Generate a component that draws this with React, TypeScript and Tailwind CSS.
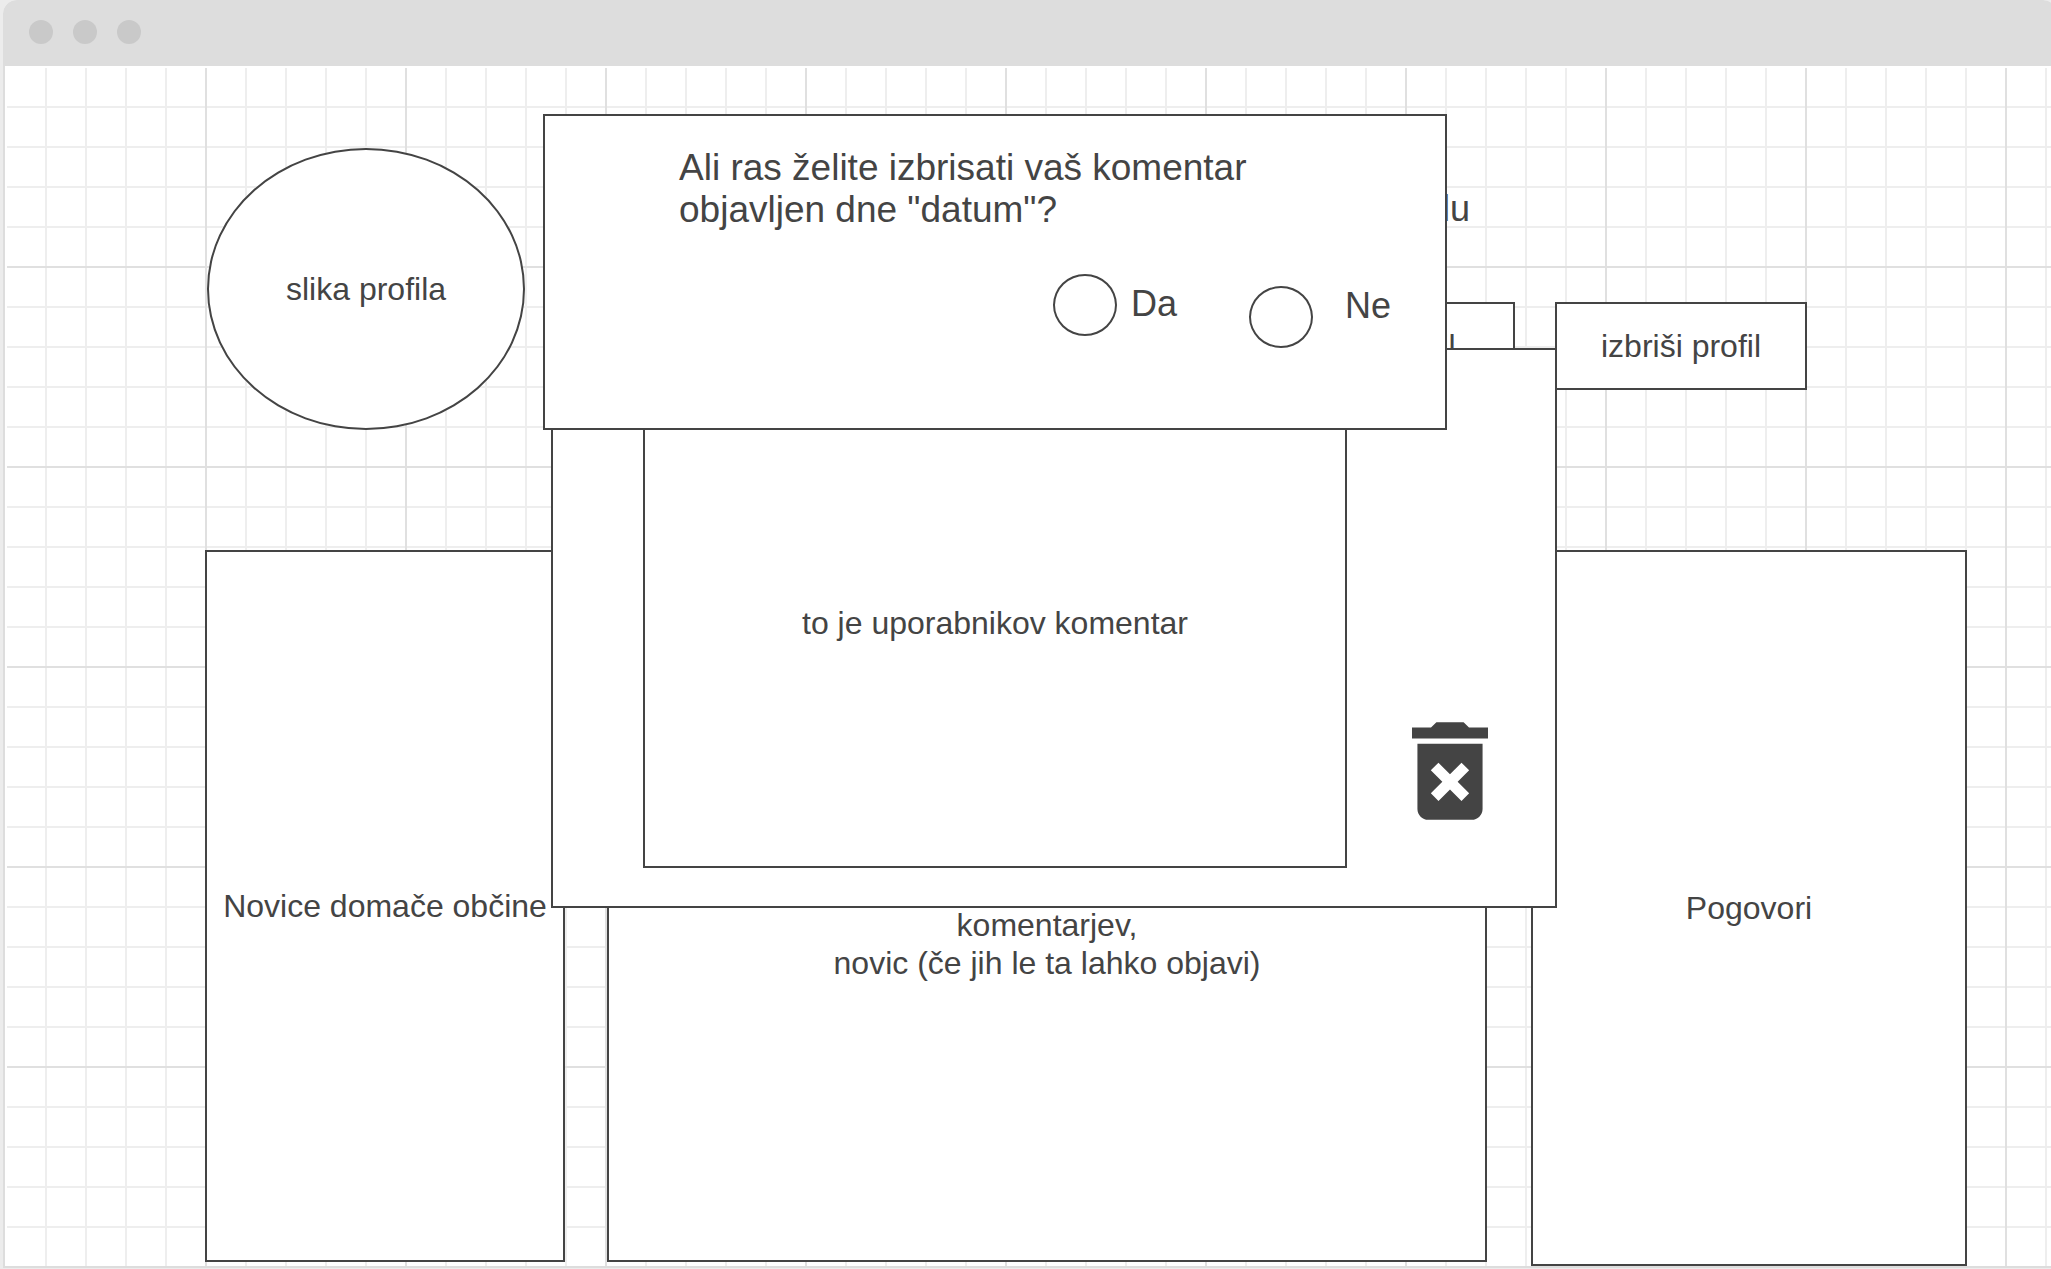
import React from "react";

function TitleBar() {
  return (
    <header className="flex h-[66px] items-center gap-5 bg-[#dddddd] pb-0.5 pl-[26px]">
      <span className="size-6 rounded-full bg-[#c9c9c9]" />
      <span className="size-6 rounded-full bg-[#c9c9c9]" />
      <span className="size-6 rounded-full bg-[#c9c9c9]" />
    </header>
  );
}

function ProfileHeader() {
  return (
    <section className="mb-[120px] flex items-start justify-between pl-0.5">
      <div className="flex h-[282px] w-[318px] items-center justify-center rounded-[50%] border-2 border-[#444444] bg-white">
        slika profila
      </div>
      <div className="mr-40 flex flex-col items-end pt-10">
        <h1 className="mr-[337px] text-[36px] leading-[42px] whitespace-nowrap">
          o profilu
        </h1>
        <div className="mt-[72px] flex gap-10">
          <button type="button" className="h-[88px] w-[268px] border-2 border-[#444444] bg-white">
            uredi profil
          </button>
          <button type="button" className="h-[88px] w-[252px] border-2 border-[#444444] bg-white">
            izbriši profil
          </button>
        </div>
      </div>
    </section>
  );
}

function Columns() {
  return (
    <section className="flex items-start text-center">
      <div className="mr-[42px] flex min-h-[712px] flex-[356] items-center justify-center border-2 border-[#444444] bg-white whitespace-nowrap">
        Novice domače občine
      </div>
      <div className="mr-[44px] flex min-h-[712px] flex-[876] items-center justify-center border-2 border-[#444444] bg-white">
        <p>
          prikaz vseh
          <br />
          uporabnikovih objav,
          <br />
          komentarjev,
          <br />
          novic (če jih le ta lahko objavi)
        </p>
      </div>
      <div className="flex min-h-[716px] flex-[432] items-center justify-center border-2 border-[#444444] bg-white">
        Pogovori
      </div>
    </section>
  );
}

function CommentPopup() {
  return (
    <section className="absolute top-[280px] left-[544px] flex h-[560px] w-[1006px] items-end border-2 border-[#444444] bg-white pr-[67px] pb-[38px] pl-[90px]">
      <div className="flex h-[490px] w-[704px] items-center justify-center border-2 border-[#444444]">
        to je uporabnikov komentar
      </div>
      <button type="button" aria-label="Izbriši komentar" className="mb-12 ml-auto">
        <svg viewBox="5 3 14 18" className="h-[98px] w-[76px] fill-[#444444]" aria-hidden="true">
          <path d="M6 19c0 1.1.9 2 2 2h8c1.1 0 2-.9 2-2V7H6v12zm2.46-7.12l1.41-1.41L12 12.59l2.12-2.12 1.41 1.41L13.41 14l2.12 2.12-1.41 1.41L12 15.41l-2.12 2.12-1.41-1.41L10.59 14l-2.13-2.12zM15.5 4l-1-1h-5l-1 1H5v2h14V4z" />
        </svg>
      </button>
    </section>
  );
}

function ConfirmDialog() {
  return (
    <div
      role="dialog"
      aria-labelledby="question"
      className="absolute top-[46px] left-[536px] h-[316px] w-[904px] border-2 border-[#444444] bg-white pt-[31px] pl-[134px] text-[36px] leading-[42px]"
    >
      <p id="question" className="text-[37px]">
        Ali ras želite izbrisati vaš komentar
        <br />
        objavljen dne "datum"?
      </p>
      <div role="radiogroup" aria-labelledby="question" className="mt-[43px] ml-[374px] flex items-start">
        <input
          id="da"
          type="radio"
          name="answer"
          className="h-[62px] w-16 appearance-none rounded-[50%] border-2 border-[#444444]"
        />
        <label htmlFor="da" className="mt-[9px] ml-[14px] w-[118px]">
          Da
        </label>
        <input
          id="ne"
          type="radio"
          name="answer"
          className="mt-3 h-[62px] w-16 appearance-none rounded-[50%] border-2 border-[#444444]"
        />
        <label htmlFor="ne" className="mt-[11px] ml-8">
          Ne
        </label>
      </div>
    </div>
  );
}

export default function App() {
  return (
    <div className="min-h-screen overflow-hidden bg-[#ececec] pb-px pl-[3px] font-['Liberation_Sans',Arial,sans-serif] text-[32px] leading-[38px] text-[#444444]">
      <div className="-mr-1.5 overflow-hidden rounded-t-[14px] border-b-2 border-[#dddddd] bg-white">
        <TitleBar />
        <div className="border-l-2 border-[#dddddd] pt-0.5 pl-0.5">
          <main className="relative bg-[linear-gradient(90deg,#e0e0e0_2px,transparent_2px),linear-gradient(#e0e0e0_2px,transparent_2px),linear-gradient(90deg,#eeeeee_2px,transparent_2px),linear-gradient(#eeeeee_2px,transparent_2px)] bg-[size:200px_200px,200px_200px,40px_40px,40px_40px] bg-[position:198px_198px,198px_198px,38px_38px,38px_38px] pt-20 pr-[90px] pl-[198px]">
            <ProfileHeader />
            <Columns />
            <CommentPopup />
            <ConfirmDialog />
          </main>
        </div>
      </div>
    </div>
  );
}
